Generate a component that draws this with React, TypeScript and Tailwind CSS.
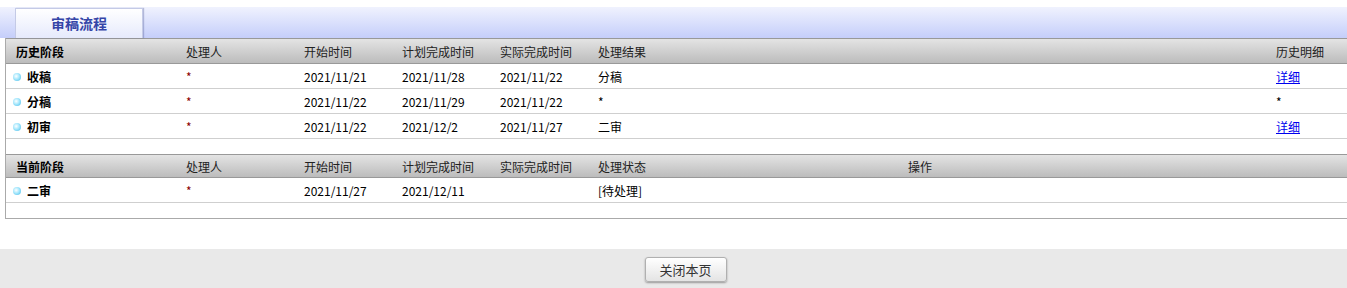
import React from "react";

type Row = {
  stage: string;
  handler: string;
  start: string;
  plan: string;
  actual: string;
  result: string;
  detail: "link" | "star" | "";
};

const history: Row[] = [
  { stage: "收稿", handler: "*", start: "2021/11/21", plan: "2021/11/28", actual: "2021/11/22", result: "分稿", detail: "link" },
  { stage: "分稿", handler: "*", start: "2021/11/22", plan: "2021/11/29", actual: "2021/11/22", result: "*", detail: "star" },
  { stage: "初审", handler: "*", start: "2021/11/22", plan: "2021/12/2", actual: "2021/11/27", result: "二审", detail: "link" },
];

const histCols = "grid grid-cols-[170px_118px_98px_98px_98px_1fr_71px]";
const curCols = "grid grid-cols-[170px_118px_98px_98px_98px_310px_1fr]";

function Bullet() {
  return (
    <span className="inline-block w-[8px] h-[8px] rounded-full mr-[6px] bg-[radial-gradient(circle_at_40%_40%,#ffffff_0%,#a6e7fc_45%,#3fb8e8_100%)]" />
  );
}

function HeaderRow({ cols, cells, h }: { cols: string; cells: string[]; h: string }) {
  return (
    <div
      className={`${cols} ${h} items-center pl-[10px] pt-[1px] border-t border-b border-[#999] bg-gradient-to-b from-[#e4e4e4] to-[#bcbcbc] text-[#222]`}
    >
      {cells.map((c, i) => (
        <div key={i} className={i === 0 ? "font-bold text-black" : ""}>
          {c}
        </div>
      ))}
    </div>
  );
}

export default function App() {
  return (
    <div
      className="w-[1347px] h-[288px] bg-white text-[12px] text-black overflow-hidden"
      style={{ fontFamily: '"Microsoft YaHei","Noto Sans CJK SC",sans-serif' }}
    >
      {/* tab strip */}
      <div className="pt-[7px]">
        <div className="h-[31px] flex items-end pl-[15px] bg-gradient-to-b from-[#f0f2fe] to-[#c5cefa]">
          <div className="w-[128px] h-[30px] flex items-center justify-center border border-b-0 border-[#c4cae6] bg-gradient-to-b from-white to-[#e6eafc] shadow-[1px_0_1px_rgba(80,90,150,0.35)] text-[14px] font-bold text-[#3545a8]">
            审稿流程
          </div>
        </div>
      </div>

      {/* stage tables */}
      <div className="ml-[5px] border-l border-b border-[#aaa]">
        <HeaderRow
          cols={histCols}
          h="h-[26px]"
          cells={["历史阶段", "处理人", "开始时间", "计划完成时间", "实际完成时间", "处理结果", "历史明细"]}
        />
        {history.map((r) => (
          <div key={r.stage} className={`${histCols} h-[25px] items-center pl-[10px] pt-[2px] border-b border-[#cfcfcf]`}>
            <div className="flex items-center font-bold -ml-[3px]">
              <Bullet />
              {r.stage}
            </div>
            <div className="text-[#8a0000]">{r.handler}</div>
            <div>{r.start}</div>
            <div>{r.plan}</div>
            <div>{r.actual}</div>
            <div>{r.result}</div>
            <div>
              {r.detail === "link" ? (
                <a href="#" className="text-[#0000ee] underline">
                  详细
                </a>
              ) : r.detail === "star" ? (
                "*"
              ) : null}
            </div>
          </div>
        ))}
        <div className="h-[15px]" />

        <HeaderRow
          cols={curCols}
          h="h-[24px]"
          cells={["当前阶段", "处理人", "开始时间", "计划完成时间", "实际完成时间", "处理状态", "操作"]}
        />
        <div className={`${curCols} h-[25px] items-center pl-[10px] pt-[1px] border-b border-[#cfcfcf]`}>
          <div className="flex items-center font-bold -ml-[3px]">
            <Bullet />
            二审
          </div>
          <div className="text-[#8a0000]">*</div>
          <div>2021/11/27</div>
          <div>2021/12/11</div>
          <div />
          <div>[待处理]</div>
          <div />
        </div>
        <div className="h-[15px]" />
      </div>

      {/* footer */}
      <div className="mt-[30px] h-[40px] bg-[#e9e9e9] flex justify-center pt-[8px]">
        <button className="w-[82px] h-[25px] rounded-[3px] border border-[#b0b0b0] bg-gradient-to-b from-white to-[#e4e4e4] shadow-[0_1px_2px_rgba(0,0,0,0.35)] text-[13px] text-[#333] ml-[24px]">
          关闭本页
        </button>
      </div>
    </div>
  );
}
